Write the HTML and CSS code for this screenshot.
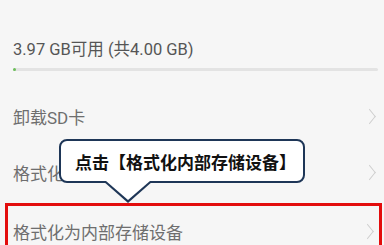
FILE: index.html
```html
<!DOCTYPE html>
<html lang="zh-CN">
<head>
    <meta charset="UTF-8">
    <title>存储设置</title>
    <link rel="stylesheet" href="styles.css">
</head>
<body>
<div class="page">
    <div class="storage">
        <p class="usage">3.97 GB可用 (共4.00 GB)</p>
        <div class="bar"><span class="used"></span></div>
    </div>
    <ul class="menu">
        <li class="row"><span>卸载SD卡</span><i class="arrow"></i></li>
        <li class="row"><span>格式化</span><i class="arrow"></i></li>
        <li class="row pick"><span>格式化为内部存储设备</span><i class="arrow"></i></li>
    </ul>
    <div class="tip">点击【格式化内部存储设备】</div>
</div>
</body>
</html>
```

FILE: styles.css
```css
html,body{
    margin: 0;padding: 0;
    background: #f6f6f6;
}
.page{
    position: relative;
    width: 384px;
    height: 245px;
    overflow: hidden;
    font-family: Roboto, "Noto Sans CJK SC", sans-serif;
}
.storage{
    padding: 39px 6px 0 13px;
}
.usage{
    margin: 0;
    font-size: 16.5px;
    line-height: 21px;
    color: #555;
}
.bar{
    margin-top: 8px;
    height: 3px;
    background: #e3e3e3;
    border-radius: 2px;
}
.used{
    display: block;
    width: 3px;height: 3px;
    background: #6cbf5a;
    border-radius: 2px;
}
.menu{
    margin: 17px 0 0;padding: 0;
    list-style: none;
}
.row{
    display: flex;
    align-items: center;
    justify-content: space-between;
    height: 56px;
    padding: 0 9px 0 13px;
    font-size: 17px;
    color: #6e6e6e;
}
.arrow{
    width: 10px;height: 10px;
    border-right: 1.2px solid #cdcdcd;
    border-top: 1.2px solid #cdcdcd;
    transform: scaleX(0.8) rotate(45deg);
}
.pick{
    height: 50px;
    margin: 3px 2px 0 5px;
    padding: 0 6px 0 5px;
    border: 3px solid #e30d0d;
    border-bottom: 0;
}
.tip{
    position: absolute;
    left: 59px;top: 139px;
    width: 228px;height: 40px;
    padding-left: 14px;
    display: flex;
    align-items: center;
    background: #fff;
    border: 2px solid #1e3657;
    border-radius: 8px;
    font-family: "Noto Sans CJK SC", sans-serif;
    font-weight: bold;
    font-size: 17px;
    color: #111;
}
.tip::before{
    content: '';
    position: absolute;
    left: 42px;top: 100%;
    border-left: 25px solid transparent;
    border-right: 25px solid transparent;
    border-top: 22px solid #1e3657;
}
.tip::after{
    content: '';
    position: absolute;
    left: 45px;top: 100%;
    border-left: 22px solid transparent;
    border-right: 22px solid transparent;
    border-top: 19px solid #fff;
}
```
